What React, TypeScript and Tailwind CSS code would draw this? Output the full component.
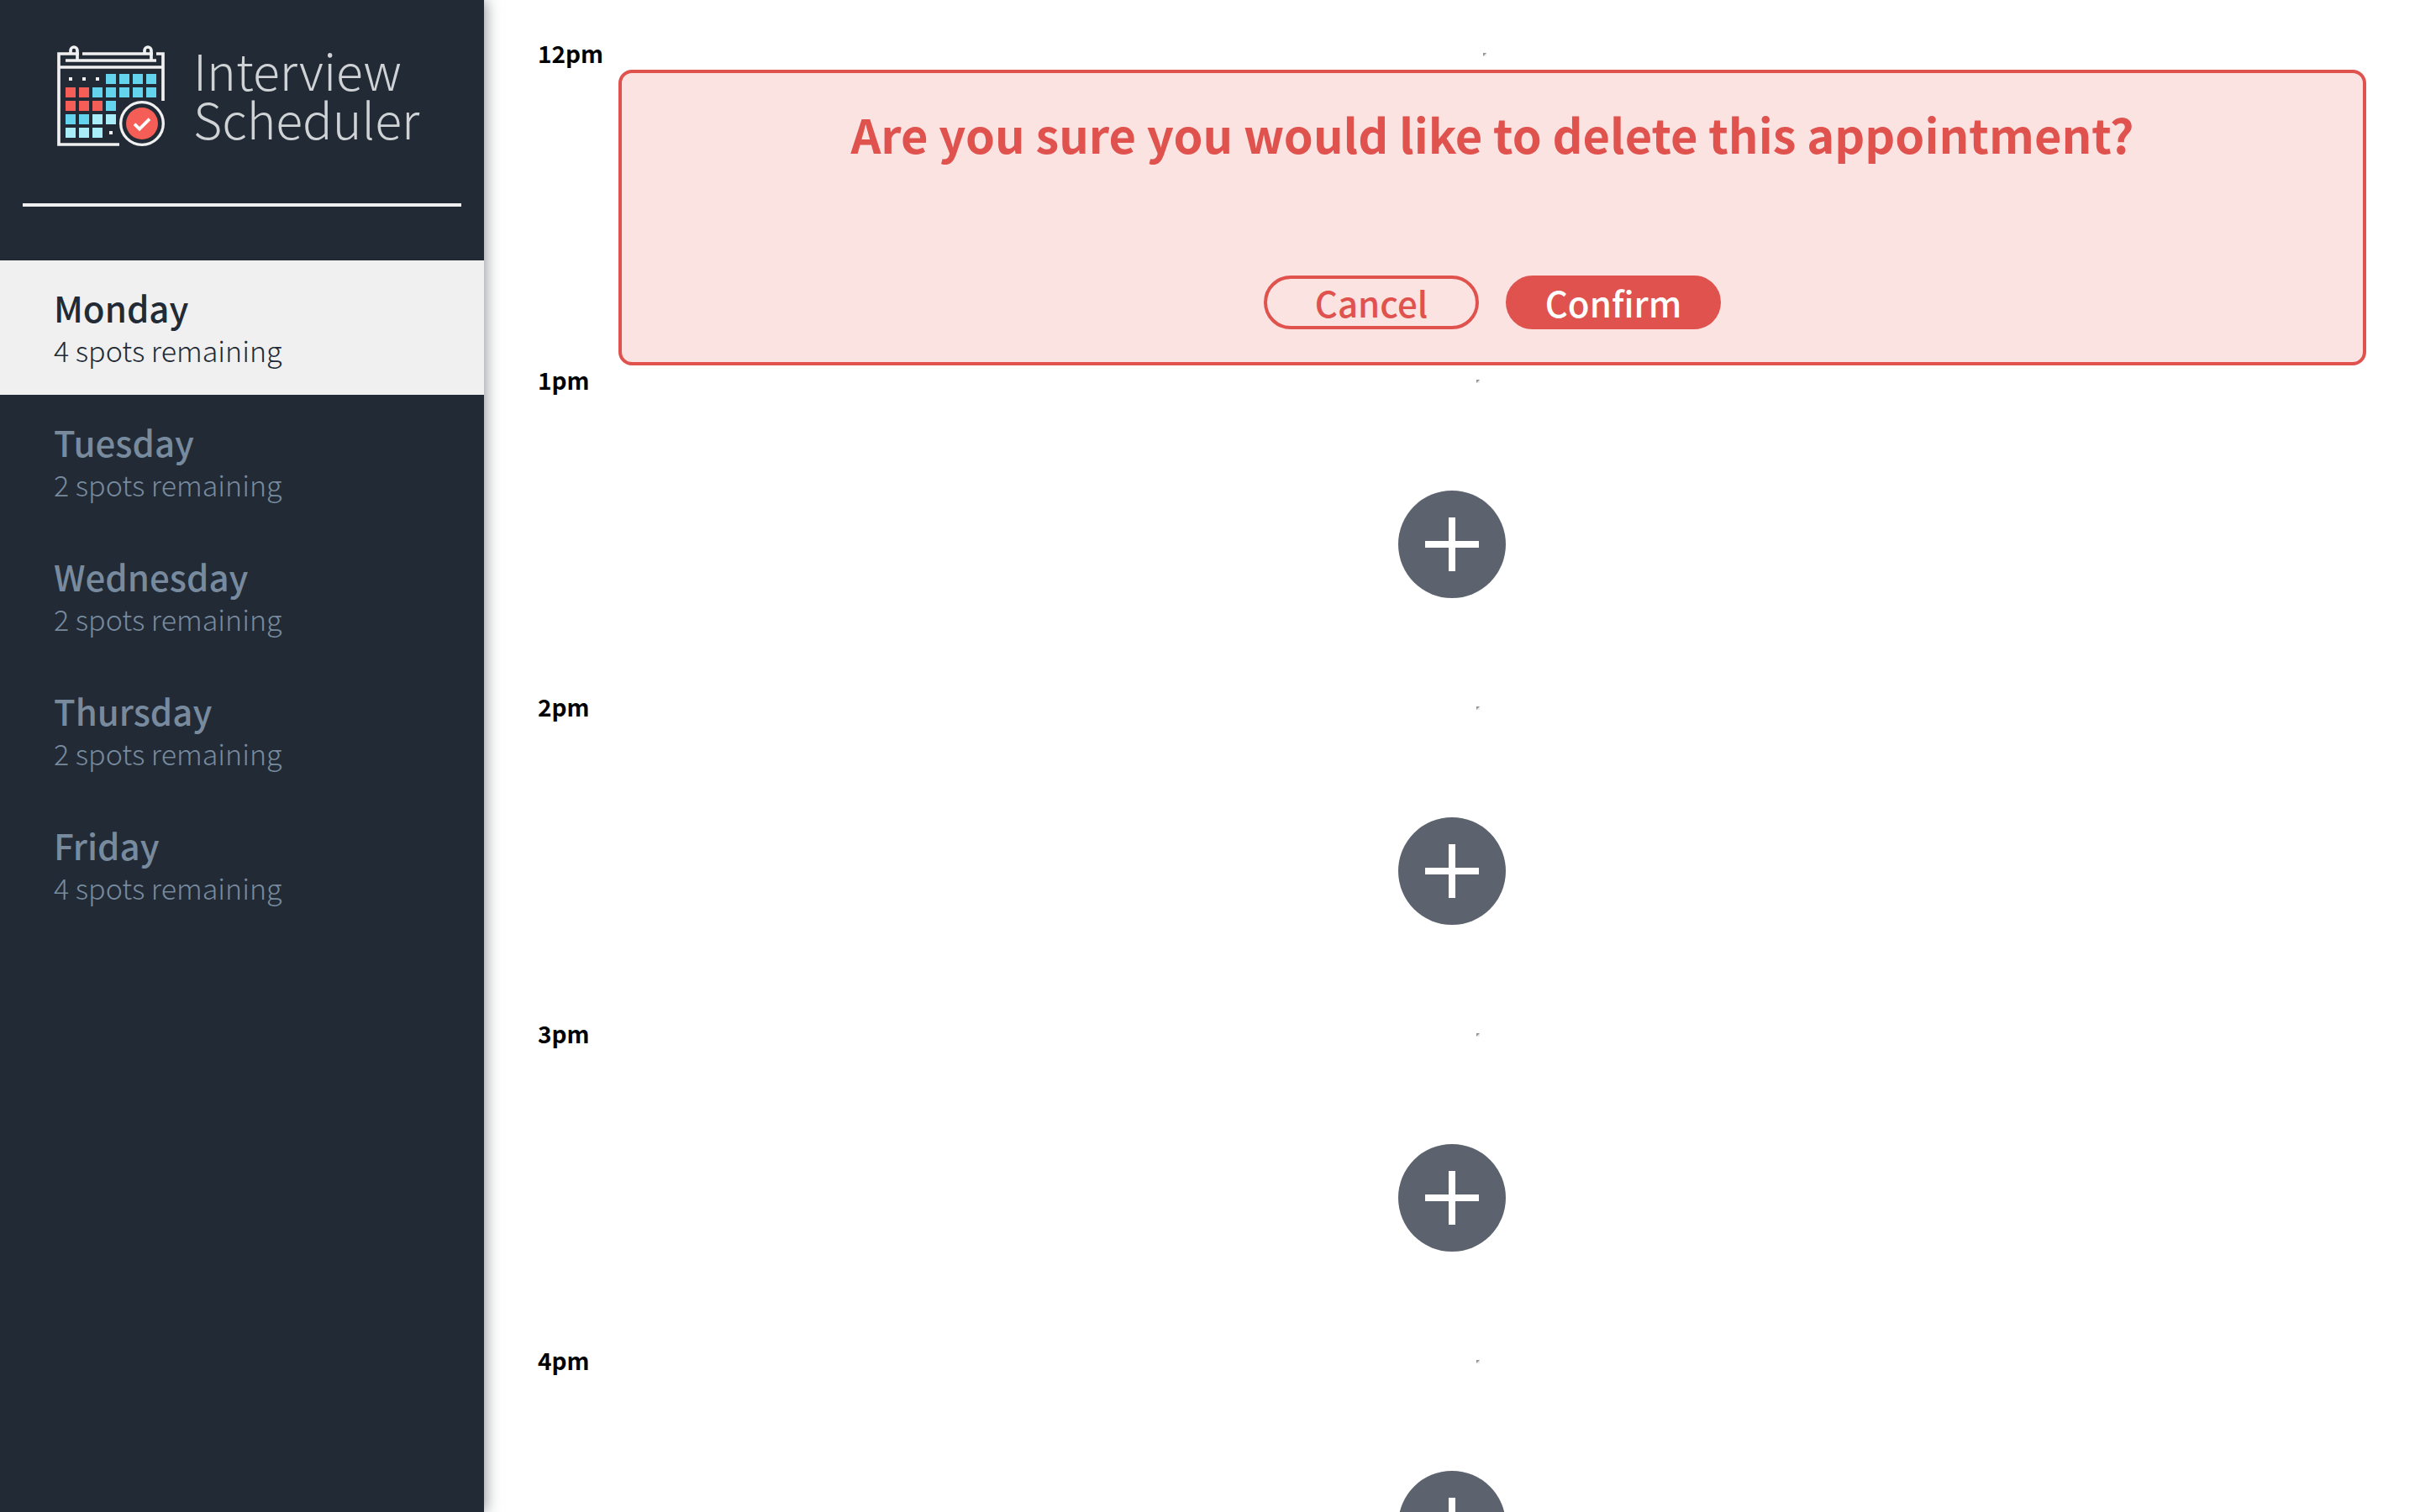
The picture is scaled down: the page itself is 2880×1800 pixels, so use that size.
import React, { useState } from "react";

type Day = { name: string; spots: number };

const days: Day[] = [
  { name: "Monday", spots: 4 },
  { name: "Tuesday", spots: 2 },
  { name: "Wednesday", spots: 2 },
  { name: "Thursday", spots: 2 },
  { name: "Friday", spots: 4 },
];

const openSlots = ["1pm", "2pm", "3pm", "4pm"];

const BLUE = "#63d3ee";
const RED = "#f45e56";
const PALE = "#a9edf9";

const calendarCells: { y: number; fills: (string | null)[] }[] = [
  { y: 144, fills: [null, null, null, BLUE, BLUE, BLUE, BLUE] },
  { y: 192, fills: [RED, RED, BLUE, BLUE, BLUE, BLUE, BLUE] },
  { y: 240, fills: [RED, RED, RED, BLUE] },
  { y: 288, fills: [BLUE, BLUE, PALE, PALE] },
  { y: 336, fills: [PALE, PALE, PALE, null] },
];

function CalendarLogo() {
  return (
    <svg viewBox="54 42 384 360" className="h-[120px] w-32 shrink-0" fill="none" aria-hidden="true">
      <g stroke="#f0f0f1" strokeWidth="11">
        <path d="M132 72H60V396H276" />
        <path d="M144 72H396" />
        <path d="M408 72H432V240" />
        <path d="M84 96H408" />
        <path d="M60 120H432" />
        <path d="M102 72V60a12 12 0 0 1 24 0V96" />
        <path d="M366 72V60a12 12 0 0 1 24 0V96" />
      </g>
      <path d="M132 66h12v12h-12zM396 66h12v12h-12z" fill="#212a35" />
      {calendarCells.map((row) =>
        row.fills.map((fill, i) =>
          fill ? (
            <rect key={`${row.y}-${i}`} x={84 + i * 48} y={row.y} width="36" height="36" fill={fill} />
          ) : (
            <rect key={`${row.y}-${i}`} x={96 + i * 48} y={row.y + 12} width="12" height="12" fill="#f0f0f1" />
          ),
        ),
      )}
      <circle cx="357" cy="321" r="76" stroke="#f0f0f1" strokeWidth="10" />
      <circle cx="357" cy="321" r="57" fill={RED} />
      <path d="M330 323l18 18 36-36" stroke="#fff" strokeWidth="11" />
    </svg>
  );
}

function DayItem({ day, active, onSelect }: { day: Day; active: boolean; onSelect: () => void }) {
  return (
    <li>
      <button
        type="button"
        onClick={onSelect}
        className={
          active
            ? "flex h-40 w-full flex-col justify-center bg-[#f0f0f0] px-16 text-left text-[#212a35]"
            : "flex h-40 w-full flex-col justify-center px-16 text-left text-[#788a9e]"
        }
      >
        <span className="text-[42px] leading-[54px] font-medium">{day.name}</span>
        <span className="text-[34px] leading-[48px] font-light">{day.spots} spots remaining</span>
      </button>
    </li>
  );
}

function SlotHeader({ time }: { time: string }) {
  return (
    <header className="flex h-[37px] items-center">
      <h4 className="pb-1 text-[28px] leading-8 font-bold text-black">{time}</h4>
      <hr className="mx-auto size-1 border-2 border-t-[#949494] border-r-[#eeeeee] border-b-[#eeeeee] border-l-[#949494]" />
    </header>
  );
}

function EmptySlot({ time }: { time: string }) {
  return (
    <article>
      <SlotHeader time={time} />
      <div className="flex h-88 items-center justify-center">
        <button type="button" aria-label={`Add appointment at ${time}`} className="size-32 rounded-full bg-[#5c636e]">
          <svg viewBox="0 0 128 128" className="size-full" aria-hidden="true">
            <path d="M64 32v64M32 64h64" stroke="#fff" strokeWidth="8" />
          </svg>
        </button>
      </div>
    </article>
  );
}

function ConfirmSlot({ time }: { time: string }) {
  return (
    <article>
      <SlotHeader time={time} />
      <section className="ml-24 flex h-88 flex-col items-center justify-between rounded-2xl border-4 border-[#df524d] bg-[#fbe3e2] pt-8 pb-[39px] text-[#df524d]">
        <h1 className="text-[56px] leading-[80px] font-bold">Are you sure you would like to delete this appointment?</h1>
        <div className="flex gap-8">
          <button type="button" className="h-16 w-64 rounded-full border-4 border-[#df524d] text-[42px] leading-[52px] font-medium">
            Cancel
          </button>
          <button
            type="button"
            className="h-16 w-64 rounded-full border-4 border-[#df524d] bg-[#df524d] text-[42px] leading-[52px] font-medium text-white"
          >
            Confirm
          </button>
        </div>
      </section>
    </article>
  );
}

export default function App() {
  const [selected, setSelected] = useState("Monday");
  return (
    <main className="flex h-screen overflow-hidden bg-white font-['Noto_Sans_CJK_JP',sans-serif]">
      <aside className="z-10 flex w-1/5 shrink-0 flex-col bg-[#212a35] shadow-[2px_0_16px_rgba(34,43,54,0.5)]">
        <div className="flex h-[242px] items-start gap-[34px] pt-[54px] pl-[68px]">
          <CalendarLogo />
          <p className="text-[59px] leading-[58px] font-light text-[#d0d3d6]">
            Interview
            <br />
            Scheduler
          </p>
        </div>
        <hr className="mx-[27px] mb-16 border-t-4 border-[#f0f0f0]" />
        <nav aria-label="Days">
          <ul>
            {days.map((day) => (
              <DayItem key={day.name} day={day} active={day.name === selected} onSelect={() => setSelected(day.name)} />
            ))}
          </ul>
        </nav>
      </aside>
      <section className="min-w-0 flex-1 overflow-hidden px-16 pt-[46px]">
        <ConfirmSlot time="12pm" />
        {openSlots.map((time) => (
          <EmptySlot key={time} time={time} />
        ))}
      </section>
    </main>
  );
}
